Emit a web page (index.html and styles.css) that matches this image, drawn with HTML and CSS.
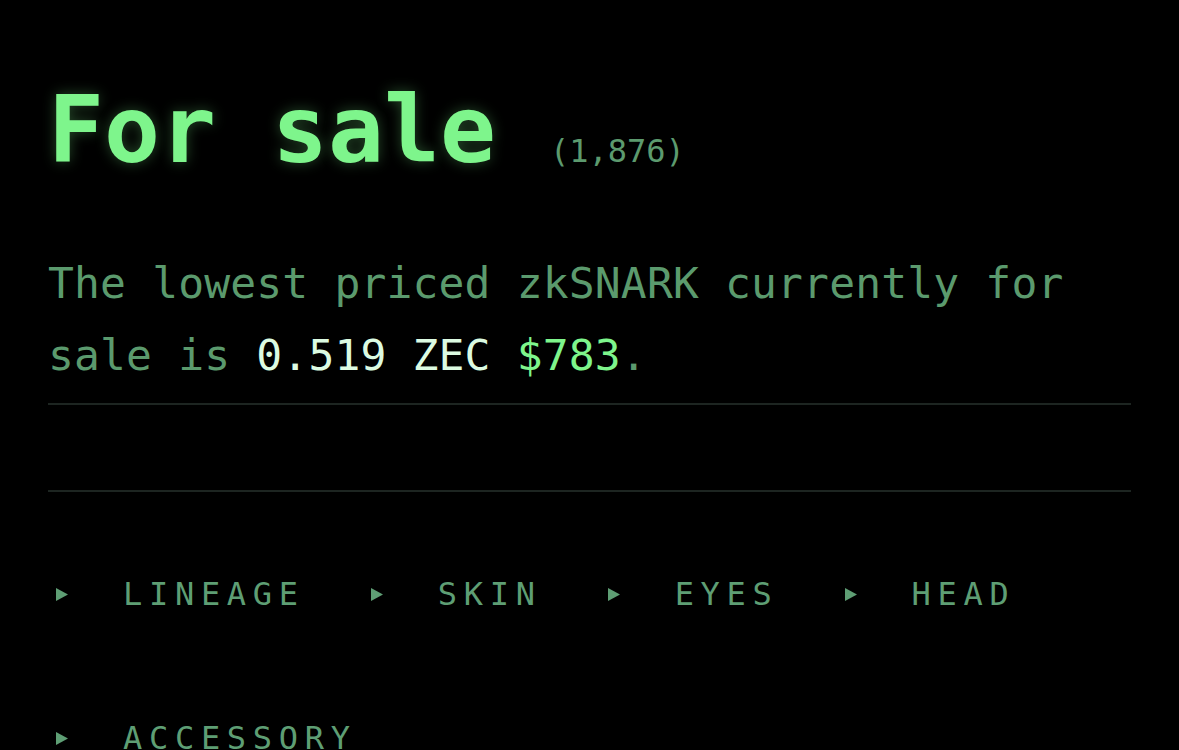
FILE: index.html
```html
<!DOCTYPE html>
<html>
<head>
    <meta charset='utf-8'>
    <title>For sale</title>
    <meta name='viewport' content='width=device-width, initial-scale=1'>
    <link rel="stylesheet" href="styles.css">
</head>
<body>
    <div class="strona">
        <div class="naglowek">
            <h1>For sale</h1>
            <span class="licznik">(1,876)</span>
        </div>
        <p class="opis">The lowest priced zkSNARK currently for sale is <span class="cena-zec">0.519 ZEC</span> <span class="cena-usd">$783</span>.</p>
        <div class="linia"></div>
        <div class="odstep"></div>
        <div class="linia"></div>
        <div class="filtry">
            <div class="filtr">
                <svg class="strzalka" viewBox="0 0 12 13"><polygon points="0,0 12,6.5 0,13"/></svg>
                <span>LINEAGE</span>
            </div>
            <div class="filtr">
                <svg class="strzalka" viewBox="0 0 12 13"><polygon points="0,0 12,6.5 0,13"/></svg>
                <span>SKIN</span>
            </div>
            <div class="filtr">
                <svg class="strzalka" viewBox="0 0 12 13"><polygon points="0,0 12,6.5 0,13"/></svg>
                <span>EYES</span>
            </div>
            <div class="filtr">
                <svg class="strzalka" viewBox="0 0 12 13"><polygon points="0,0 12,6.5 0,13"/></svg>
                <span>HEAD</span>
            </div>
            <div class="filtr">
                <svg class="strzalka" viewBox="0 0 12 13"><polygon points="0,0 12,6.5 0,13"/></svg>
                <span>ACCESSORY</span>
            </div>
        </div>
    </div>
</body>
</html>
```

FILE: styles.css
```css
html, body {
    margin: 0;
    background-color: #000;
    font-family: "DejaVu Sans Mono", "Liberation Mono", monospace;
}

.strona {
    display: flex;
    flex-direction: column;
    padding: 70px 48px 0 48px;
}

.naglowek {
    display: flex;
    align-items: baseline;
    gap: 54px;
}

h1 {
    margin: 0;
    font-size: 93px;
    line-height: 120px;
    font-weight: bold;
    color: #7ef58c;
    text-shadow: 0 0 14px rgba(126, 245, 140, 0.3);
}

.licznik {
    font-size: 32px;
    color: #5c9a6e;
}

.opis {
    margin: 57px 0 12px 0;
    font-size: 43px;
    line-height: 72px;
    letter-spacing: 0.15px;
    color: #5b9a6d;
}

.cena-zec {
    color: #dcfbe2;
}

.cena-usd {
    color: #7ef58c;
}

.linia {
    height: 2px;
    background-color: #1d2521;
}

.odstep {
    height: 85px;
}

.filtry {
    display: flex;
    flex-wrap: wrap;
    column-gap: 66px;
    row-gap: 100px;
    padding: 80px 0 0 8px;
}

.filtr {
    display: flex;
    align-items: center;
    gap: 55px;
    height: 44px;
    color: #5e9e74;
    font-size: 32px;
    letter-spacing: 6.7px;
}

.strzalka {
    width: 12px;
    height: 13px;
    fill: #5e9e74;
}
```
